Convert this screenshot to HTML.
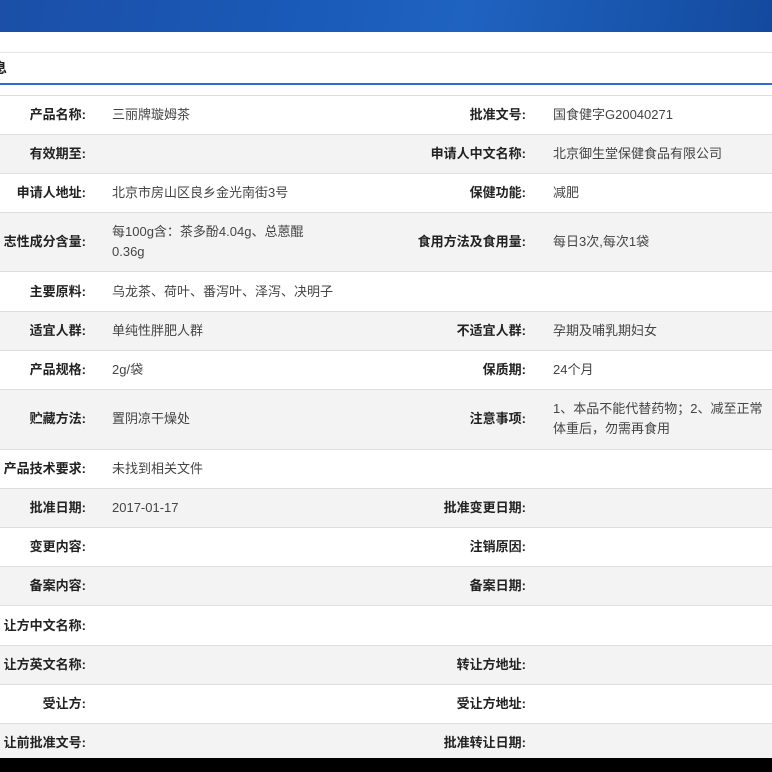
<!DOCTYPE html>
<html><head><meta charset="utf-8"><style>
*{margin:0;padding:0;box-sizing:border-box}
body{width:772px;height:772px;overflow:hidden;background:#fff;font-family:"Liberation Sans","Noto Sans CJK SC",sans-serif;font-size:13px;color:#333;position:relative}
.banner{position:absolute;left:0;top:0;width:772px;height:32px;background:linear-gradient(100deg,#1b4fa8 0%,#1a5ab8 40%,#1f63c0 60%,#134a9e 100%)}
.hdr{position:absolute;left:0;top:52px;width:772px;height:33px;border-top:1px solid #e6e6e6;border-bottom:2px solid #2a6fd6;background:#fff}
.hdr span{position:absolute;left:-7px;top:5px;font-weight:bold;font-size:14px;line-height:20px;color:#222}
.row{position:absolute;left:0;width:772px;border-top:1px solid #ddd}
.g{background:#f3f3f3}
.l,.r{position:absolute;font-weight:bold;color:#222;text-align:right;white-space:nowrap;line-height:20px}
.l{right:686px}
.r{right:246px}
.v1,.v2{position:absolute;line-height:20px;white-space:nowrap;color:#444}
.v1{left:112px}.v2{left:553px}
.black{position:absolute;left:0;top:758px;width:772px;height:14px;background:#000}
</style></head><body>
<div class="banner"></div>
<div class="hdr"><span>息</span></div>

<div class="row" style="top:95px;height:39px"><div class="l" style="top:9px">产品名称:</div><div class="v1" style="top:9px">三丽牌璇姆茶</div><div class="r" style="top:9px">批准文号:</div><div class="v2" style="top:9px">国食健字G20040271</div></div>
<div class="row g" style="top:134px;height:39px"><div class="l" style="top:9px">有效期至:</div><div class="r" style="top:9px">申请人中文名称:</div><div class="v2" style="top:9px">北京御生堂保健食品有限公司</div></div>
<div class="row" style="top:173px;height:39px"><div class="l" style="top:9px">申请人地址:</div><div class="v1" style="top:9px">北京市房山区良乡金光南街3号</div><div class="r" style="top:9px">保健功能:</div><div class="v2" style="top:9px">减肥</div></div>
<div class="row g" style="top:212px;height:59px"><div class="l" style="top:19px">志性成分含量:</div><div class="v1" style="top:9px">每100g含：茶多酚4.04g、总蒽醌<br>0.36g</div><div class="r" style="top:19px">食用方法及食用量:</div><div class="v2" style="top:19px">每日3次,每次1袋</div></div>
<div class="row" style="top:271px;height:40px"><div class="l" style="top:10px">主要原料:</div><div class="v1" style="top:10px">乌龙茶、荷叶、番泻叶、泽泻、决明子</div></div>
<div class="row g" style="top:311px;height:39px"><div class="l" style="top:9px">适宜人群:</div><div class="v1" style="top:9px">单纯性胖肥人群</div><div class="r" style="top:9px">不适宜人群:</div><div class="v2" style="top:9px">孕期及哺乳期妇女</div></div>
<div class="row" style="top:350px;height:39px"><div class="l" style="top:9px">产品规格:</div><div class="v1" style="top:9px">2g/袋</div><div class="r" style="top:9px">保质期:</div><div class="v2" style="top:9px">24个月</div></div>
<div class="row g" style="top:389px;height:60px"><div class="l" style="top:19px">贮藏方法:</div><div class="v1" style="top:19px">置阴凉干燥处</div><div class="r" style="top:19px">注意事项:</div><div class="v2" style="top:9px">1、本品不能代替药物；2、减至正常<br>体重后，勿需再食用</div></div>
<div class="row" style="top:449px;height:39px"><div class="l" style="top:9px">产品技术要求:</div><div class="v1" style="top:9px">未找到相关文件</div></div>
<div class="row g" style="top:488px;height:39px"><div class="l" style="top:9px">批准日期:</div><div class="v1" style="top:9px">2017-01-17</div><div class="r" style="top:9px">批准变更日期:</div></div>
<div class="row" style="top:527px;height:39px"><div class="l" style="top:9px">变更内容:</div><div class="r" style="top:9px">注销原因:</div></div>
<div class="row g" style="top:566px;height:39px"><div class="l" style="top:9px">备案内容:</div><div class="r" style="top:9px">备案日期:</div></div>
<div class="row" style="top:605px;height:40px"><div class="l" style="top:10px">让方中文名称:</div></div>
<div class="row g" style="top:645px;height:39px"><div class="l" style="top:9px">让方英文名称:</div><div class="r" style="top:9px">转让方地址:</div></div>
<div class="row" style="top:684px;height:39px"><div class="l" style="top:9px">受让方:</div><div class="r" style="top:9px">受让方地址:</div></div>
<div class="row g" style="top:723px;height:35px"><div class="l" style="top:9px">让前批准文号:</div><div class="r" style="top:9px">批准转让日期:</div></div>
<div class="black"></div>
</body></html>
